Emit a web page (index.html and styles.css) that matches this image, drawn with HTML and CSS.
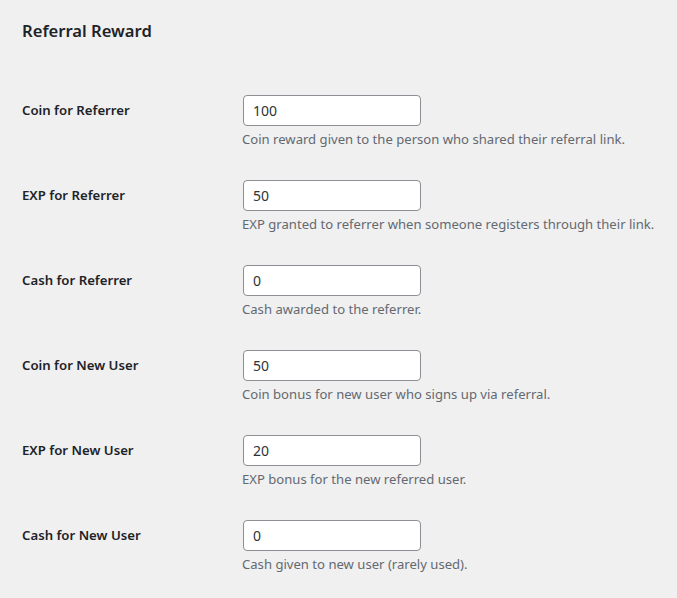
FILE: index.html
```html
<!DOCTYPE html>
<html>
<head>
<meta charset="utf-8">
<link rel="stylesheet" href="styles.css">
</head>
<body>
<div class="wrap">
  <h2 class="title">Referral Reward</h2>
  <div class="form-table">
    <div class="row">
      <div class="label">Coin for Referrer</div>
      <div class="field">
        <input class="input" type="text" value="100">
        <p class="description">Coin reward given to the person who shared their referral link.</p>
      </div>
    </div>
    <div class="row">
      <div class="label">EXP for Referrer</div>
      <div class="field">
        <input class="input" type="text" value="50">
        <p class="description">EXP granted to referrer when someone registers through their link.</p>
      </div>
    </div>
    <div class="row">
      <div class="label">Cash for Referrer</div>
      <div class="field">
        <input class="input" type="text" value="0">
        <p class="description">Cash awarded to the referrer.</p>
      </div>
    </div>
    <div class="row">
      <div class="label">Coin for New User</div>
      <div class="field">
        <input class="input" type="text" value="50">
        <p class="description">Coin bonus for new user who signs up via referral.</p>
      </div>
    </div>
    <div class="row">
      <div class="label">EXP for New User</div>
      <div class="field">
        <input class="input" type="text" value="20">
        <p class="description">EXP bonus for the new referred user.</p>
      </div>
    </div>
    <div class="row">
      <div class="label">Cash for New User</div>
      <div class="field">
        <input class="input" type="text" value="0">
        <p class="description">Cash given to new user (rarely used).</p>
      </div>
    </div>
  </div>
</div>
</body>
</html>
```
FILE: styles.css
```css
html, body {
  margin: 0;
  padding: 0;
  background: #f0f0f1;
}
body {
  font-family: "Noto Sans", "Open Sans", sans-serif;
  color: #1d2327;
  font-size: 13px;
}
.wrap {
  padding: 20px 0 0 22px;
}
.title {
  margin: 0;
  font-size: 16.6px;
  font-weight: 600;
  line-height: 22px;
}
.form-table {
  margin-top: 38px;
}
.row {
  display: flex;
  height: 85px;
  box-sizing: border-box;
}
.label {
  width: 200px;
  padding: 21px 10px 0 0;
  font-size: 13.2px;
  font-weight: 600;
  line-height: 18px;
}
.field {
  padding: 15px 10px 0 11px;
}
.input {
  display: block;
  box-sizing: border-box;
  width: 178px;
  height: 31px;
  margin: 0;
  padding: 0 9px;
  border: 1px solid #8c8f94;
  border-radius: 4px;
  background: #fff;
  color: #2c3338;
  font-family: inherit;
  font-size: 14px;
}
.description {
  margin: 3px 0 0 -1px;
  color: #646970;
  font-size: 13.1px;
  line-height: 20px;
}
```
